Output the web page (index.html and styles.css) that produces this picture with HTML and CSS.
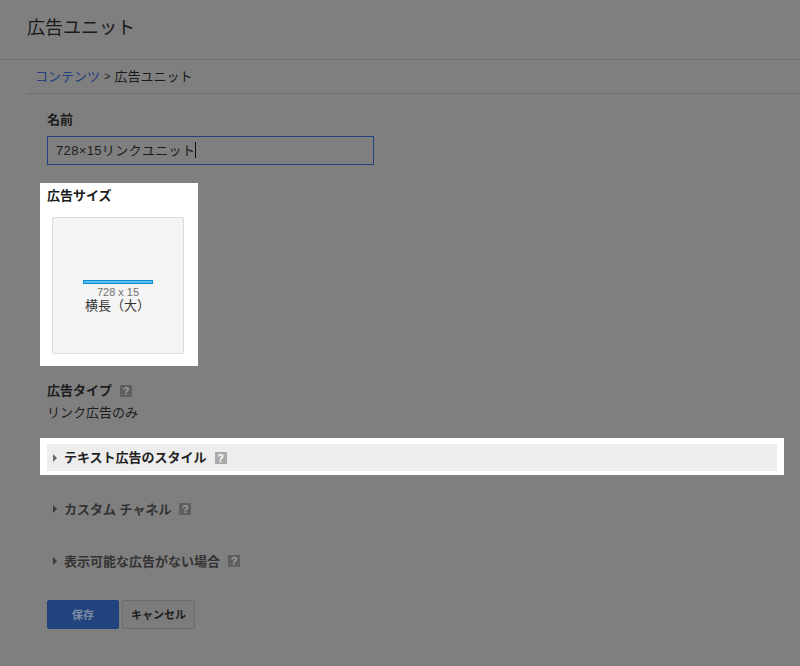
FILE: index.html
```html
<!DOCTYPE html>
<html lang="ja">
<head>
<meta charset="utf-8">
<title>広告ユニット</title>
<link rel="stylesheet" href="styles.css">
</head>
<body>
<header class="page-header"><h1>広告ユニット</h1></header>
<nav class="crumbs"><a href="#">コンテンツ</a><span class="sep">&gt;</span><span>広告ユニット</span></nav>
<main class="form">
  <div class="label name-label">名前</div>
  <div class="input"><span>728×15リンクユニット</span><i class="caret"></i></div>
  <section class="size-box">
    <div class="label">広告サイズ</div>
    <div class="tile">
      <div class="bar"></div>
      <div class="dims">728 x 15</div>
      <div class="size-name">横長（大）</div>
    </div>
  </section>
  <div class="label type-label">広告タイプ<span class="help">?</span></div>
  <div class="type-value">リンク広告のみ</div>
  <section class="lit-row">
    <div class="row-inner"><i class="tri lit-tri"></i><span class="row-title lit-title">テキスト広告のスタイル</span><span class="help help-lit">?</span></div>
  </section>
  <div class="row first"><i class="tri"></i><span class="row-title">カスタム チャネル</span><span class="help">?</span></div>
  <div class="row"><i class="tri"></i><span class="row-title">表示可能な広告がない場合</span><span class="help">?</span></div>
  <div class="actions">
    <button class="btn primary">保存</button>
    <button class="btn">キャンセル</button>
  </div>
</main>
</body>
</html>
```
FILE: styles.css
```css
html, body { margin: 0; padding: 0; }
body {
  width: 800px; height: 666px; overflow: hidden;
  background: #7f7f7f; color: #1c1c1c;
  font-family: "Liberation Sans", "Noto Sans CJK JP", sans-serif;
  font-size: 13px;
}
.page-header { height: 59px; border-bottom: 1px solid #6f6f6f; }
.page-header h1 { margin: 0; padding: 14px 0 0 27px; font-size: 18px; font-weight: 400; line-height: 28px; color: #1a1a1a; }
.crumbs {
  margin-left: 27px; height: 31px; padding: 0 0 2px 8px;
  display: flex; align-items: center; gap: 4px;
  border-bottom: 1px solid #6f6f6f; font-size: 13px; color: #1a1a1a;
}
.crumbs a { color: #23407f; text-decoration: none; font-size: 13px; }
.sep { font-size: 11px; }
.form { padding-left: 47px; }
.label { font-weight: 700; font-size: 13px; line-height: 18px; color: #1c1c1c; }
.name-label { margin-top: 17px; }
.input {
  margin-top: 7px; width: 327px; height: 29px; box-sizing: border-box;
  border: 1px solid #22417f; padding: 0 0 2px 8px;
  display: flex; align-items: center; font-size: 13px; letter-spacing: 0.35px; color: #1c1c1c;
}
.caret { width: 1px; height: 16px; background: #111; }
.size-box {
  margin: 18px 0 0 -7px; width: 158px; height: 183px; box-sizing: border-box;
  background: #fff; padding: 4px 0 0 7px;
}
.tile {
  margin: 12px 0 0 5px; width: 132px; height: 137px; box-sizing: border-box;
  background: #f4f4f4; border: 1px solid #dcdcdc; border-radius: 2px;
  display: flex; flex-direction: column; align-items: center; padding-top: 62px;
}
.bar { width: 70px; height: 4px; box-sizing: border-box; background: #5cc0ef; border: 1px solid #0b8fd3; }
.dims { font-size: 11px; line-height: 13px; margin-top: 2px; color: #6f6f6f; }
.size-name { font-size: 13px; line-height: 13px; margin: 0 1px 0 0; color: #333; }
.type-label { margin-top: 16px; display: flex; align-items: center; }
.type-value { font-size: 13px; line-height: 20px; margin-top: 3px; color: #1c1c1c; }
.help {
  display: inline-block; width: 12px; height: 12px; line-height: 12px; margin-left: 8px;
  background: #5f5f5f; color: #a0a0a0; font-size: 11px; font-weight: 700; text-align: center;
  font-family: "Liberation Sans", sans-serif;
}
.help-lit { background: #aaa; color: #fff; }
.lit-row {
  margin: 15px 0 0 -7px; width: 744px; height: 37px; box-sizing: border-box;
  background: #fff; padding: 6px 7px 4px;
}
.row-inner { height: 27px; background: #ededed; display: flex; align-items: center; padding-left: 6px; }
.tri {
  width: 0; height: 0; margin-right: 7px;
  border-left: 4px solid #3a3a3a; border-top: 4px solid transparent; border-bottom: 4px solid transparent;
}
.lit-tri { border-left-color: #666; }
.row-title { font-weight: 700; font-size: 13px; line-height: 18px; color: #333; padding-top: 1px; }
.lit-title { color: #222; padding-top: 0; }
.row { display: flex; align-items: center; height: 20px; padding-left: 6px; margin-top: 32px; }
.row.first { margin-top: 24px; }
.actions { display: flex; gap: 3px; margin-top: 29px; }
.btn {
  height: 29px; box-sizing: border-box; border-radius: 2px; border: 1px solid #6c6c6c;
  background: #7c7c7c; color: #1c1c1c; font: 700 11px "Liberation Sans", "Noto Sans CJK JP", sans-serif;
  padding: 0 0 2px; width: 73px;
}
.primary { width: 72px; background: #22437e; border-color: #1f3f78; color: #7f8da3; }
```
